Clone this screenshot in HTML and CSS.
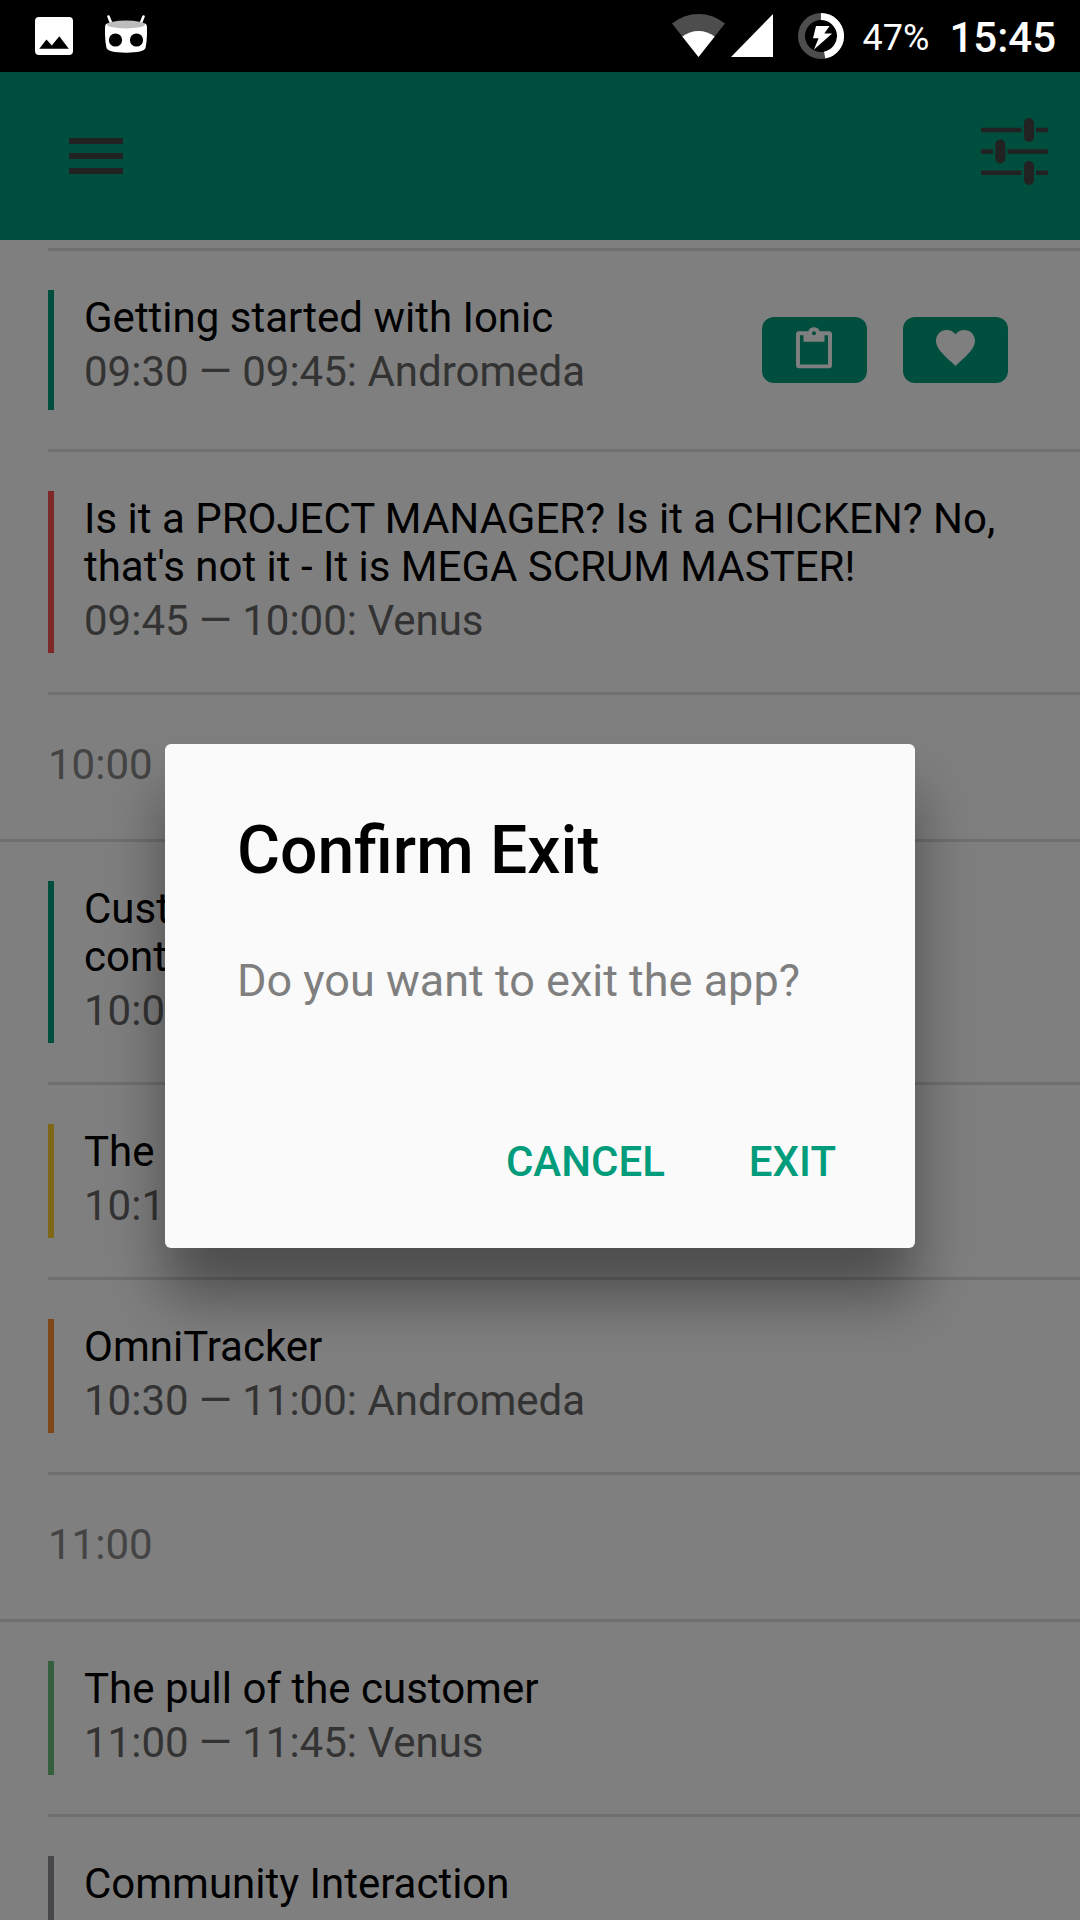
FILE: index.html
```html
<!DOCTYPE html>
<html lang="en">
<head>
<meta charset="utf-8">
<title>Schedule</title>
<link rel="stylesheet" href="styles.css">
</head>
<body>
<div class="screen">
  <header class="status">
    <div class="status-left">
      <svg class="photo" width="38" height="38" viewBox="0 0 38 38"><path fill="#fff" fill-rule="evenodd" d="M4 0H34Q38 0 38 4V34Q38 38 34 38H4Q0 38 0 34V4Q0 0 4 0ZM4.3 31.7H33.8L24.3 19.2 16.8 28.500 11.500 22.500Z"/></svg>
      <svg class="robot" width="42" height="38" viewBox="0 0 42 38"><path stroke="#fff" stroke-width="2.600" stroke-linecap="round" d="M3.500 1.500L6.500 9M38.500 1.500L35.500 9"/><path fill="#fff" d="M2 8.500Q21 14 40 8.500Q42 9 42 13Q42.300 25 40.500 33Q39 37.600 21 37.700Q3 37.600 1.500 33Q-.3 25 0 13Q0 9 2 8.500Z"/><ellipse cx="21" cy="9.500" rx="19" ry="3.900" fill="#bdbdbd"/><circle cx="10.500" cy="25" r="6.600"/><circle cx="31.500" cy="25" r="6.600"/></svg>
    </div>
    <div class="status-right">
      <svg class="wifi" width="53" height="43" viewBox="0 0 53 43"><path fill="#4d4d4d" d="M0 9.600Q11.500 0 26.500 0T53 9.600L26.500 43Z"/><path fill="#fff" d="M10.300 22.600Q17.500 17 26.500 17T42.700 22.600L26.500 43Z"/></svg>
      <svg class="signal" width="42" height="43" viewBox="0 0 42 43"><path fill="#fff" d="M42 0V43H0Z"/></svg>
      <svg class="battery" width="46" height="46" viewBox="0 0 46 46"><circle cx="23" cy="23" r="19.500" fill="none" stroke="#4d4d4d" stroke-width="7"/><path fill="none" stroke="#fff" stroke-width="7" d="M23 3.500A19.500 19.500 0 0 1 26.700 42.150"/><path fill="#fff" d="M18 13H31.600L26.300 20.600H34.200L16 36.500 20.600 25.300H15Z"/></svg>
      <span class="percent">47%</span>
      <span class="clock">15:45</span>
    </div>
  </header>

  <div class="page">
    <nav class="toolbar">
      <svg width="54" height="36" viewBox="0 0 54 36"><path fill="#444" d="M0 0H54V6H0ZM0 15H54V21H0ZM0 30H54V36H0Z"/></svg>
      <svg width="67" height="76" viewBox="0 0 67 76"><g fill="#444"><path d="M0 9.700H40.500V14.300H0ZM55 9.700H67V14.300H55ZM0 31.200H12V35.800H0ZM26.500 31.200H67V35.800H26.500ZM0 52.500H40.500V57.100H0ZM55 52.500H67V57.100H55Z"/><rect x="43" width="10" height="24" rx="5"/><rect x="14.300" y="21.500" width="10" height="24" rx="5"/><rect x="43" y="43" width="10" height="24" rx="5"/></g></svg>
    </nav>
    <main class="list">
      <article class="item">
        <div class="session green tall"><h3>Getting started with Ionic</h3><p>09:30 — 09:45: Andromeda</p></div>
        <div class="actions">
          <span class="action"><svg width="37" height="42" viewBox="0 0 37 42"><path fill="#fff" fill-rule="evenodd" d="M3 4.300H12.300A6 6 0 0 1 23.700 4.300H33Q36 4.300 36 7.300V38.300Q36 41.300 33 41.300H3Q0 41.300 0 38.300V7.300Q0 4.300 3 4.300ZM4 8.300V37.500H32V8.300H28.500V14.800H7.500V8.300ZM20 6.300A2 2 0 1 0 16 6.300A2 2 0 1 0 20 6.300Z"/></svg></span>
          <span class="action"><svg class="heart" width="39" height="36" viewBox="2 3 20 18.350"><path fill="#fff" d="M12 21.350l-1.450-1.320C5.400 15.360 2 12.280 2 8.500 2 5.420 4.420 3 7.500 3c1.740 0 3.410.81 4.500 2.090C13.090 3.810 14.760 3 16.500 3 19.580 3 22 5.420 22 8.500c0 3.780-3.400 6.860-8.550 11.540L12 21.350z"/></svg></span>
        </div>
      </article>
      <article class="item">
        <div class="session red"><h3>Is it a PROJECT MANAGER? Is it a CHICKEN? No,<br>that's not it - It is MEGA SCRUM MASTER!</h3><p>09:45 — 10:00: Venus</p></div>
      </article>
      <h2 class="hour">10:00</h2>
      <article class="item first">
        <div class="session green"><h3>Customer<br>content</h3><p>10:00</p></div>
      </article>
      <article class="item">
        <div class="session yellow"><h3>The</h3><p>10:15</p></div>
      </article>
      <article class="item">
        <div class="session orange"><h3>OmniTracker</h3><p>10:30 — 11:00: Andromeda</p></div>
      </article>
      <h2 class="hour">11:00</h2>
      <article class="item first">
        <div class="session leaf"><h3>The pull of the customer</h3><p>11:00 — 11:45: Venus</p></div>
      </article>
      <article class="item">
        <div class="session gray"><h3>Community Interaction</h3><p>11:00</p></div>
      </article>
    </main>
    <div class="backdrop">
      <section class="dialog" role="dialog">
        <h1>Confirm Exit</h1>
        <p class="message">Do you want to exit the app?</p>
        <div class="buttons"><button>CANCEL</button><button>EXIT</button></div>
      </section>
    </div>
  </div>
</div>
</body>
</html>
```
FILE: styles.css
```css
* { box-sizing: border-box; }
body, h1, h2, h3, p { margin: 0; }
body { font-family: Roboto, sans-serif; }
svg { display: block; flex: none; }

.screen {
  width: 1080px;
  height: 1920px;
  display: flex;
  flex-direction: column;
  overflow: hidden;
  background: #fff;
}

.status {
  flex: none;
  height: 72px;
  padding: 0 24px 0 35px;
  display: flex;
  justify-content: space-between;
  align-items: center;
  background: #000;
  color: #fff;
}
.status-left, .status-right { display: flex; align-items: center; }
.robot { margin: -4px 0 0 32px; }
.signal { margin-left: 6px; }
.wifi, .signal { margin-top: -1px; }
.battery { margin-left: 25px; }
.percent { margin-left: 19px; font-size: 36px; line-height: 42px; padding-top: 3px; }
.clock { margin-left: 20px; padding-top: 3px; font-size: 42px; font-weight: 500; line-height: 48px; }

.page { position: relative; flex: 1; min-height: 0; overflow: hidden; }
.toolbar {
  height: 168px;
  padding: 0 32px 0 69px;
  display: flex;
  align-items: center;
  justify-content: space-between;
  background: #009c7b;
}

.list { padding-top: 8px; }
.item {
  margin-left: 48px;
  padding: 39px 72px 39px 0;
  border-top: 3px solid #dedede;
  display: flex;
  justify-content: space-between;
  align-items: center;
}
.first { margin-left: 0; padding-left: 48px; }
.session {
  padding: 4px 0 8px 30px;
  border-left: 6px solid;
  white-space: nowrap;
}
.tall { padding-bottom: 14px; }
.session h3 { font-size: 42px; font-weight: 400; line-height: 48px; color: #000; }
.session p { margin-top: 6px; font-size: 42px; line-height: 48px; color: #666; }
.green { border-color: #009c7b; }
.red { border-color: #ff5054; }
.yellow { border-color: #fcd030; }
.orange { border-color: #fe8c30; }
.leaf { border-color: #6abf7b; }
.gray { border-color: #8f8f92; }

.hour {
  margin-left: 48px;
  height: 147px;
  border-top: 3px solid #dedede;
  font-size: 42px;
  font-weight: 400;
  line-height: 139px;
  color: #888;
}

.actions { display: flex; gap: 36px; }
.action {
  width: 105px;
  height: 66px;
  padding-bottom: 5px;
  border-radius: 12px;
  display: flex;
  align-items: center;
  justify-content: center;
  background: #009c7b;
}

.backdrop {
  position: absolute;
  inset: 0;
  display: flex;
  justify-content: center;
  align-items: center;
  background: rgba(0, 0, 0, .5);
}
.dialog {
  width: 750px;
  height: 504px;
  padding: 71px 55px 0 72px;
  border-radius: 6px;
  background: #fafafa;
  box-shadow: 0 48px 60px rgba(0, 0, 0, .4);
}
.dialog h1 { font-size: 66px; font-weight: 500; line-height: 72px; color: #000; }
.message { margin-top: 67px; font-size: 45px; line-height: 54px; color: #7f7f7f; }
.buttons { margin-top: 100px; display: flex; justify-content: flex-end; gap: 36px; }
.buttons button {
  padding: 24px;
  border: 0;
  background: none;
  font: 500 42px/60px Roboto, sans-serif;
  color: #009c7b;
}
```
